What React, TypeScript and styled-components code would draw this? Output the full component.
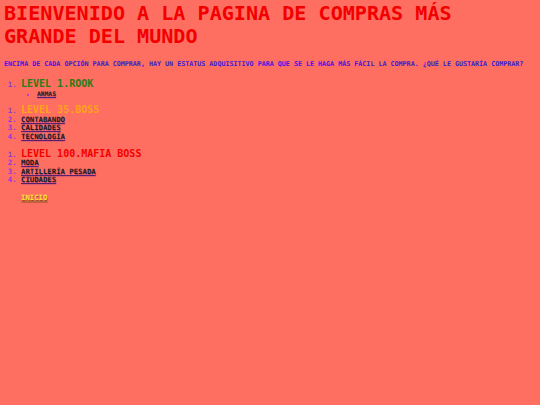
import React from "react";
import styled, { createGlobalStyle } from "styled-components";

const Global = createGlobalStyle`
  html, body { margin: 0; padding: 0; background: #ff6f61; }
  body { font-family: "DejaVu Sans Mono", "Liberation Mono", monospace; font-weight: bold; }
`;

const Page = styled.div`
  padding: 2px 8px 0 4px;
  min-height: 403px;
  background: #ff6f61;
`;

const Title = styled.h1`
  margin: 0;
  font-size: 20.1px;
  line-height: 23px;
  font-weight: 800;
  color: #f20000;
`;

const Intro = styled.p`
  margin: 12px 0 0 0;
  font-size: 6.7px;
  line-height: 9px;
  color: #3d18d8;
`;

const Levels = styled.ol`
  margin: 10px 0 0 0;
  padding-left: 17px;
  font-size: 7.3px;
  line-height: 8.6px;
  & + & { margin-top: 7px; }
  li::marker { color: #8a3ad6; }
`;

const Level = styled.span<{ $c: string }>`
  font-size: 10px;
  line-height: 10.5px;
  color: ${(p) => p.$c};
`;

const Sub = styled.ul`
  margin: 0;
  padding-left: 16px;
  list-style: disc;
  font-size: 6.3px;
  li::marker { color: #8a3ad6; font-size: 5px; }
`;

const Item = styled.li``;

const Link = styled.a`
  color: #1c1c1c;
  text-decoration: underline;
  text-decoration-color: #5a2070;
  text-shadow: 0.5px 0.5px 0.5px rgba(120, 40, 140, 0.5);
`;

const Home = styled.a`
  display: inline-block;
  margin: 2px 0 0 17px;
  font-size: 7.3px;
  color: #ffe43a;
  text-decoration: underline;
  text-decoration-color: #b06a30;
  text-shadow: 0.5px 0.5px 0.5px rgba(120, 60, 20, 0.7);
`;

export default function App() {
  return (
    <>
      <Global />
      <Page>
        <Title>BIENVENIDO A LA PAGINA DE COMPRAS MÁS GRANDE DEL MUNDO</Title>
        <Intro>
          ENCIMA DE CADA OPCIÓN PARA COMPRAR, HAY UN ESTATUS ADQUISITIVO PARA QUE SE LE HAGA MÁS FÁCIL LA COMPRA. ¿QUÉ LE GUSTARÍA COMPRAR?
        </Intro>
        <Levels>
          <Item>
            <Level $c="#2f7a12">LEVEL 1.ROOK</Level>
            <Sub>
              <Item><Link href="#">ARMAS</Link></Item>
            </Sub>
          </Item>
        </Levels>
        <Levels>
          <Item><Level $c="#ffa21a">LEVEL 35.BOSS</Level></Item>
          <Item><Link href="#">CONTABANDO</Link></Item>
          <Item><Link href="#">CALIDADES</Link></Item>
          <Item><Link href="#">TECNOLOGÍA</Link></Item>
        </Levels>
        <Levels>
          <Item><Level $c="#f20000">LEVEL 100.MAFIA BOSS</Level></Item>
          <Item><Link href="#">MODA</Link></Item>
          <Item><Link href="#">ARTILLERÍA PESADA</Link></Item>
          <Item><Link href="#">CIUDADES</Link></Item>
        </Levels>
        <Home href="#">INICIO</Home>
      </Page>
    </>
  );
}
